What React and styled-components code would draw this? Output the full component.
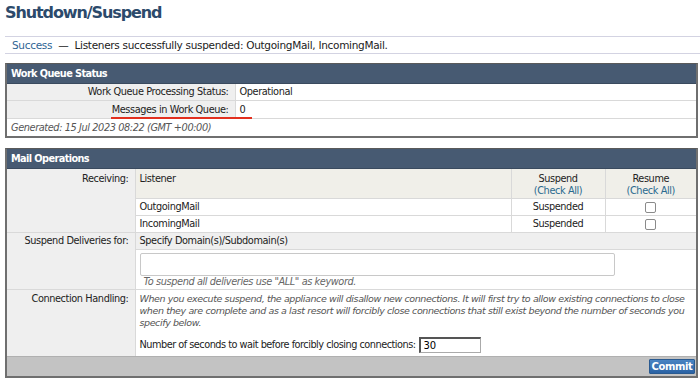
import styled, { createGlobalStyle } from "styled-components";

const GlobalStyle = createGlobalStyle`
  body {
    margin: 0;
    font-family: "DejaVu Sans", Verdana, sans-serif;
    font-size: 9.75px;
    letter-spacing: -0.4px;
    color: #2a2a2a;
    background: #ffffff;
  }
`;

function App() {
  const listeners = ["OutgoingMail", "IncomingMail"];
  return (
    <Page>
      <GlobalStyle />
      <Title>Shutdown/Suspend</Title>
      <Notice>
        <NoticeLabel>Success</NoticeLabel>
        <span>&nbsp;&nbsp;—&nbsp;&nbsp;Listeners successfully suspended: OutgoingMail, IncomingMail.</span>
      </Notice>

      <Panel>
        <PanelHeader>Work Queue Status</PanelHeader>
        <Table>
          <colgroup>
            <col style={{ width: 228 }} />
            <col />
          </colgroup>
          <tbody>
            <tr>
              <Label $h={16}>Work Queue Processing Status:</Label>
              <Cell $h={16}>Operational</Cell>
            </tr>
            <tr>
              <Label $h={17}>
                <Marked>Messages in Work Queue:</Marked>
              </Label>
              <Cell $h={17}>0</Cell>
            </tr>
            <tr>
              <Generated colSpan={2}>Generated: 15 Jul 2023 08:22 (GMT +00:00)</Generated>
            </tr>
          </tbody>
        </Table>
      </Panel>

      <Panel $gap={10}>
        <PanelHeader>Mail Operations</PanelHeader>
        <Table>
          <colgroup>
            <col style={{ width: 128 }} />
            <col />
            <col style={{ width: 94 }} />
            <col style={{ width: 91 }} />
          </colgroup>
          <tbody>
            <tr>
              <Label rowSpan={3} $top={4}>Receiving:</Label>
              <HeadCell>Listener</HeadCell>
              <HeadCell $center>
                Suspend
                <br />
                <CheckAll>(Check All)</CheckAll>
              </HeadCell>
              <HeadCell $center>
                Resume
                <br />
                <CheckAll>(Check All)</CheckAll>
              </HeadCell>
            </tr>
            {listeners.map((name) => (
              <tr key={name}>
                <Cell $h={16}>{name}</Cell>
                <Cell $h={16} $center $divided>Suspended</Cell>
                <Cell $h={16} $center $divided>
                  <Box />
                </Cell>
              </tr>
            ))}
            <tr>
              <Label rowSpan={2} $top={2}>Suspend Deliveries for:</Label>
              <SubHead colSpan={3}>Specify Domain(s)/Subdomain(s)</SubHead>
            </tr>
            <tr>
              <InputCell colSpan={3}>
                <DomainInput />
                <Hint>To suspend all deliveries use "ALL" as keyword.</Hint>
              </InputCell>
            </tr>
            <tr>
              <Label $top={3}>Connection Handling:</Label>
              <InputCell colSpan={3} $bottom={3}>
                <Para>
                  When you execute suspend, the appliance will disallow new connections. It will first try to allow
                  existing connections to close
                  <br />
                  when they are complete and as a last resort will forcibly close connections that still exist beyond
                  the number of seconds you
                  <br />
                  specify below.
                </Para>
                <SecondsRow>
                  Number of seconds to wait before forcibly closing connections:
                  <SecondsInput defaultValue="30" />
                </SecondsRow>
              </InputCell>
            </tr>
          </tbody>
        </Table>
        <Footer>
          <CommitButton>Commit</CommitButton>
        </Footer>
      </Panel>
    </Page>
  );
}

const Page = styled.div`
  padding: 0 2px 0 5px;
`;

const Title = styled.h1`
  margin: 0;
  padding-top: 3px;
  font-size: 16px;
  line-height: 20px;
  letter-spacing: -1.1px;
  font-weight: bold;
  color: #2c4a6b;
`;

const Notice = styled.div`
  margin-top: 13px;
  margin-right: -2px;
  height: 16px;
  line-height: 16px;
  padding-left: 7px;
  font-size: 10.5px;
  letter-spacing: -0.3px;
  border-top: 1px solid #d3d3e2;
  border-bottom: 1px solid #d3d3e2;
  color: #222;
`;

const NoticeLabel = styled.span`
  color: #2f6494;
`;

const Panel = styled.div`
  margin-top: ${(p) => (p.$gap ? p.$gap : 9)}px;
  border: 2px solid #6f6f6f;
  border-top: 1px solid #5a5a5a;
`;

const PanelHeader = styled.div`
  height: 19px;
  line-height: 19px;
  padding-left: 4px;
  background: #475a72;
  color: #ffffff;
  font-weight: bold;
  letter-spacing: -0.6px;
  border-bottom: 1px solid #3a4a5e;
`;

const Table = styled.table`
  width: 100%;
  border-collapse: collapse;
  table-layout: fixed;
  td {
    border-bottom: 1px solid #d9d9d9;
    line-height: 12px;
  }
  tr:last-child td {
    border-bottom: none;
  }
`;

const Label = styled.td`
  background: #efefef;
  text-align: right;
  white-space: nowrap;
  height: ${(p) => (p.$h ? p.$h : 12)}px;
  padding: ${(p) => (p.$top ? p.$top : 0)}px 6px 0 4px;
  vertical-align: ${(p) => (p.$top ? "top" : "middle")};
  border-right: 1px solid #d9d9d9;
  color: #222;
`;

const Marked = styled.span`
  position: relative;
  &::after {
    content: "";
    position: absolute;
    left: -1px;
    right: -23px;
    bottom: -4px;
    height: 2px;
    background: #e2301f;
  }
`;

const Cell = styled.td`
  height: ${(p) => p.$h}px;
  padding: 0 4px;
  background: #ffffff;
  color: #222;
  text-align: ${(p) => (p.$center ? "center" : "left")};
  border-left: ${(p) => (p.$divided ? "1px solid #d9d9d9" : "none")};
`;

const Generated = styled.td`
  height: 17px;
  padding: 0 4px;
  font-style: italic;
  color: #555;
`;

const HeadCell = styled.td`
  height: 25px;
  padding: 4px 4px 0;
  vertical-align: top;
  background: #f0efe9;
  text-align: ${(p) => (p.$center ? "center" : "left")};
  border-left: ${(p) => (p.$center ? "1px solid #d9d9d9" : "none")};
  color: #222;
`;

const CheckAll = styled.span`
  color: #2a6a8f;
`;

const Box = styled.span`
  display: inline-block;
  vertical-align: middle;
  box-sizing: border-box;
  width: 11px;
  height: 11px;
  border: 1px solid #8a8a8a;
  border-radius: 2px;
  background: #fff;
`;

const SubHead = styled.td`
  height: 16px;
  padding: 0 4px;
  background: #efefef;
  color: #222;
`;

const InputCell = styled.td`
  padding: 3px 4px ${(p) => (p.$bottom ? p.$bottom : 1)}px;
  background: #fff;
  vertical-align: top;
`;

const DomainInput = styled.input`
  display: block;
  box-sizing: border-box;
  width: 475px;
  height: 23px;
  margin: 0;
  border: 1px solid #c8c8c8;
  border-radius: 2px;
`;

const Hint = styled.div`
  padding-left: 4px;
  font-style: italic;
  color: #666;
`;

const Para = styled.div`
  font-size: 9.5px;
  font-style: italic;
  color: #555;
  white-space: nowrap;
`;

const SecondsRow = styled.div`
  display: flex;
  align-items: center;
  gap: 3px;
  margin-top: 8px;
  letter-spacing: -0.5px;
  color: #222;
`;

const SecondsInput = styled.input`
  box-sizing: border-box;
  width: 62px;
  height: 16px;
  margin: 0;
  padding: 0 3px;
  border: 1px solid #aaa;
  border-top: 2px solid #555;
  border-left: 2px solid #555;
  font-family: inherit;
  font-size: 10px;
  letter-spacing: -0.3px;
`;

const Footer = styled.div`
  display: flex;
  justify-content: flex-end;
  align-items: center;
  height: 19px;
  padding-right: 1px;
  background: #c3c3c3;
  border-top: 1px solid #b0b0b0;
`;

const CommitButton = styled.button`
  height: 15px;
  width: 46px;
  padding: 0;
  font-family: inherit;
  font-size: 10px;
  letter-spacing: -0.4px;
  font-weight: bold;
  color: #ffffff;
  background: linear-gradient(#4a84c2, #2a62a4);
  border: 1px solid #2a5a90;
  border-radius: 1px;
`;

export default App;
